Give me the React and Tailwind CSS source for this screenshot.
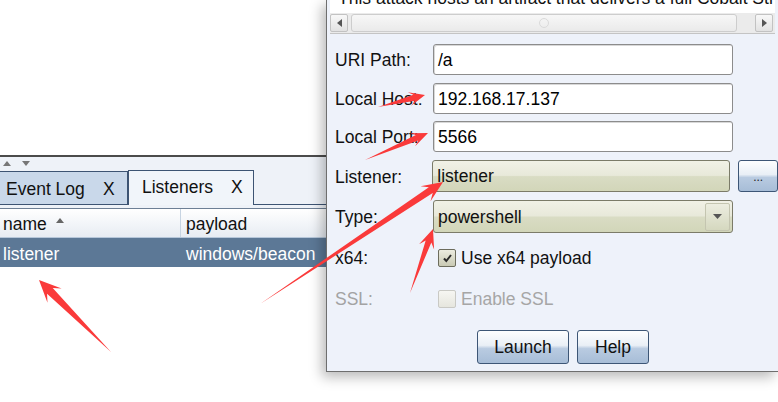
import React from "react";

const arrows = [
  { x1: 378, y1: 107, x2: 425, y2: 95, h: 16, w: 7, s: 3 },
  { x1: 365, y1: 160, x2: 428, y2: 133, h: 17, w: 7, s: 3 },
  { x1: 260, y1: 304, x2: 443, y2: 182, h: 21, w: 9, s: 3.5 },
  { x1: 410, y1: 293, x2: 433, y2: 229, h: 19, w: 8, s: 3 },
  { x1: 111, y1: 352, x2: 39, y2: 280, h: 22, w: 10, s: 4 },
];

function arrowPoints({ x1, y1, x2, y2, h, w, s }) {
  const dx = x2 - x1;
  const dy = y2 - y1;
  const len = Math.hypot(dx, dy);
  const ux = dx / len;
  const uy = dy / len;
  const px = -uy;
  const py = ux;
  const j = h * 0.7;
  const pts = [
    [x1, y1],
    [x2 - ux * j + px * s, y2 - uy * j + py * s],
    [x2 - ux * h + px * w, y2 - uy * h + py * w],
    [x2, y2],
    [x2 - ux * h - px * w, y2 - uy * h - py * w],
    [x2 - ux * j - px * s, y2 - uy * j - py * s],
  ];
  return pts.map((p) => p.join(",")).join(" ");
}

function TextField({ value }) {
  return (
    <div className="flex h-full w-[300px] items-center rounded-[3px] border border-[#8c8c8c] bg-white pl-[4px] pt-px shadow-[inset_1px_1px_0_#d8d8d8]">
      {value}
    </div>
  );
}

function Row({ label, muted, className, children }) {
  return (
    <div className={`flex items-center ${className}`}>
      <div className={`w-[106px] pl-[8px] pt-px ${muted ? "text-[#a3a3a3]" : "text-[#111]"}`}>{label}</div>
      {children}
    </div>
  );
}

function Checkbox({ checked, disabled }) {
  return (
    <div
      className={`flex h-[18px] w-[18px] items-center justify-center rounded-[2px] border ${
        disabled
          ? "border-[#c9c9c4] bg-gradient-to-b from-[#f6f6f2] to-[#e6e6de]"
          : "border-[#6c6c5c] bg-gradient-to-b from-[#ecece0] to-[#c9cab4]"
      }`}
    >
      {checked && (
        <svg width="11" height="10" viewBox="0 0 11 10">
          <path d="M2 5.5 L4.3 8 L9 2" fill="none" stroke="#2a2a2a" strokeWidth="2" />
        </svg>
      )}
    </div>
  );
}

function SwingButton({ children, width }) {
  return (
    <div
      className={`flex h-[34px] ${width} items-center justify-center rounded-[3px] border border-[#3d5676] bg-[linear-gradient(to_bottom,#fdfeff_0%,#e9eff6_45%,#b9cbe1_55%,#a7bdd7_100%)] text-[#111]`}
    >
      {children}
    </div>
  );
}

export default function App() {
  return (
    <div className="relative h-[402px] w-[778px] overflow-hidden bg-white font-['Liberation_Sans',Arial,sans-serif] text-[17.5px] leading-[20px]">
      {/* left panel: tabs and listener table */}
      <div className="flex flex-col">
        <div className="h-[155px] bg-white" />
        <div className="h-[2px] bg-[#4b4b4b]" />
        <div className="flex h-[13px] items-center gap-[11px] bg-[#eef2f8] pl-[3px] text-[#777]">
          <svg width="8" height="5" viewBox="0 0 8 5">
            <path d="M0 5 L4 0 L8 5 Z" fill="#777" />
          </svg>
          <svg width="8" height="5" viewBox="0 0 8 5">
            <path d="M0 0 L8 0 L4 5 Z" fill="#777" />
          </svg>
        </div>
        <div className="flex h-[35px] items-end bg-[#eef2f8]">
          <div className="flex h-[34px] w-[128px] items-center border-y border-r border-[#3d5473] bg-[#c9d8ea] pl-[6px] pt-[2px] text-[#111]">
            <span className="w-[97px]">Event Log</span>
            <span>X</span>
          </div>
          <div className="flex h-[35px] w-[126px] items-center border-x border-t border-[#3d5473] bg-[#f1f5fa] pb-[2px] pl-[13px] text-[#111]">
            <span className="w-[89px]">Listeners</span>
            <span>X</span>
          </div>
          <div className="h-full flex-1 border-b border-[#3d5473]" />
        </div>
        <div className="h-[3px] bg-[#eef2f8]" />
        <div className="flex h-[30px] border-y border-t-[#6d7f95] border-b-[#b6c7da] bg-gradient-to-b from-white to-[#e7ecf3] text-[#111]">
          <div className="flex w-[181px] items-center border-r border-[#c7d4e2] pl-[3px] pt-px">
            <span>name</span>
            <svg className="ml-[9px] mb-[6px]" width="8" height="5" viewBox="0 0 8 5">
              <path d="M0 5 L4 0 L8 5 Z" fill="#666" />
            </svg>
          </div>
          <div className="flex items-center pl-[5px] pt-px">payload</div>
        </div>
        <div className="flex h-[29px] items-center bg-[#5c7896] pt-[2px] text-white">
          <div className="w-[182px] pl-[3px]">listener</div>
          <div className="pl-[4px]">windows/beacon</div>
        </div>
      </div>

      {/* launch dialog */}
      <div className="absolute left-[326px] top-0 flex h-[372px] w-[452px] flex-col border-b border-l border-[#6e6e6e] bg-[#eef2fa] shadow-[-4px_5px_12px_rgba(0,0,0,0.28)]">
        <div className="px-[3px]">
          <div className="h-[13px] overflow-hidden bg-white">
            <div className="-mt-[12px] whitespace-nowrap pl-[8px] text-[#111]">
              This attack hosts an artifact that delivers a full Cobalt Strike payload
            </div>
          </div>
          <div className="flex h-[21px] items-stretch border-b border-[#c4c4c4] bg-[#ebebeb] py-px">
            <div className="flex w-[18px] items-center justify-center rounded-[2px] border border-[#c2c2c2] bg-gradient-to-b from-[#f8f8f8] to-[#e2e2e2]">
              <svg width="5" height="8" viewBox="0 0 5 8">
                <path d="M5 0 L0 4 L5 8 Z" fill="#555" />
              </svg>
            </div>
            <div className="ml-[3px] flex w-[386px] items-center justify-center rounded-[3px] border border-[#cdcdcd] bg-gradient-to-b from-[#f7f7f7] to-[#eaeaea]">
              <div className="h-[10px] w-[10px] rounded-full border border-[#dadada]" />
            </div>
            <div className="w-[18px]" />
            <div className="flex w-[18px] items-center justify-center rounded-[2px] border border-[#c2c2c2] bg-gradient-to-b from-[#f8f8f8] to-[#e2e2e2]">
              <svg width="5" height="8" viewBox="0 0 5 8">
                <path d="M0 0 L5 4 L0 8 Z" fill="#555" />
              </svg>
            </div>
          </div>
        </div>

        <div className="flex flex-col pt-[10px]">
          <Row label="URI Path:" className="h-[31px]">
            <TextField value="/a" />
          </Row>
          <Row label="Local Host:" className="mt-[8px] h-[31px]">
            <TextField value="192.168.17.137" />
          </Row>
          <Row label="Local Port:" className="mt-[7px] h-[31px]">
            <TextField value="5566" />
          </Row>
          <Row label="Listener:" className="mt-[8px] h-[32px]">
            <div className="flex h-full w-[300px] items-center rounded-[3px] border border-[#7b7b68] bg-[linear-gradient(to_bottom,#f1f1e6_0%,#e8e9da_48%,#d9dcc4_52%,#d2d6b9_100%)] pl-[4px] text-[#111]">
              listener
            </div>
            <div className="ml-[8px] flex h-full w-[40px] items-end justify-center rounded-[3px] border border-[#3d5676] bg-[linear-gradient(to_bottom,#fdfeff_0%,#e9eff6_45%,#b9cbe1_55%,#a7bdd7_100%)] pb-[8px] text-[12px] leading-[12px] text-[#222]">
              ...
            </div>
          </Row>
          <Row label="Type:" className="mt-[8px] h-[33px]">
            <div className="flex h-full w-[300px] items-center rounded-[3px] border border-[#7b7b68] bg-[linear-gradient(to_bottom,#f1f1e6_0%,#e8e9da_48%,#d9dcc4_52%,#d2d6b9_100%)] pl-[4px] pr-[2px] text-[#111]">
              <span className="flex-1">powershell</span>
              <div className="flex h-[28px] w-[25px] items-center justify-center rounded-[2px] border border-[#c4c5b0] bg-gradient-to-b from-[#ecede0] to-[#d5d8bf]">
                <svg width="9" height="5" viewBox="0 0 9 5">
                  <path d="M0 0 L9 0 L4.5 5 Z" fill="#555" />
                </svg>
              </div>
            </div>
          </Row>
          <Row label="x64:" className="mt-[9px] h-[31px]">
            <div className="flex items-center gap-[5px] pl-[5px] text-[#111]">
              <Checkbox checked />
              <span>Use x64 payload</span>
            </div>
          </Row>
          <Row label="SSL:" muted className="mt-[10px] h-[31px]">
            <div className="flex items-center gap-[5px] pl-[5px] text-[#a6a6a6]">
              <Checkbox disabled />
              <span>Enable SSL</span>
            </div>
          </Row>
          <div className="mt-[16px] flex gap-[8px] pl-[150px]">
            <SwingButton width="w-[92px]">Launch</SwingButton>
            <SwingButton width="w-[72px]">Help</SwingButton>
          </div>
        </div>
      </div>

      {/* red annotation arrows */}
      <svg className="pointer-events-none absolute inset-0 z-10" width="778" height="402" viewBox="0 0 778 402">
        {arrows.map((a, i) => (
          <polygon key={i} points={arrowPoints(a)} fill="#fa3a3a" />
        ))}
      </svg>
    </div>
  );
}
